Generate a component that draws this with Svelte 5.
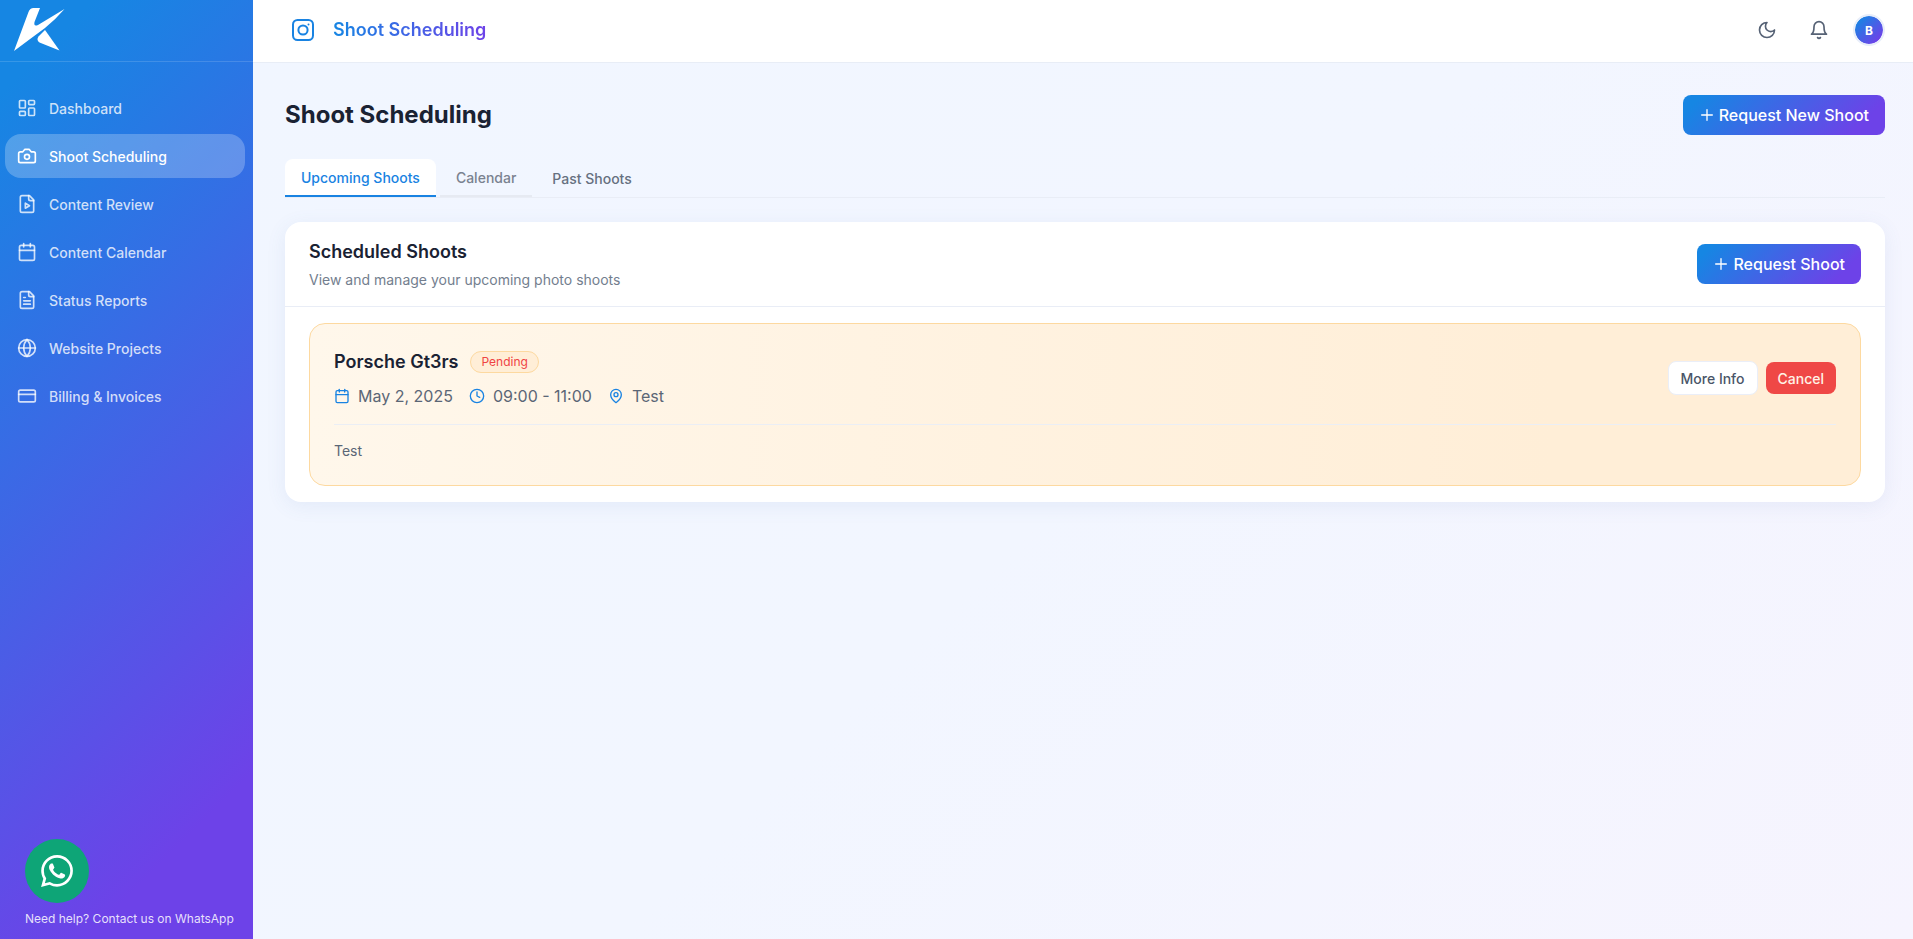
<script>
  const nav = [
    { label: 'Dashboard', icon: 'dashboard' },
    { label: 'Shoot Scheduling', icon: 'camera', active: true },
    { label: 'Content Review', icon: 'fileplay' },
    { label: 'Content Calendar', icon: 'calendar' },
    { label: 'Status Reports', icon: 'filetext' },
    { label: 'Website Projects', icon: 'globe' },
    { label: 'Billing & Invoices', icon: 'card' }
  ];

  const tabs = ['Upcoming Shoots', 'Calendar', 'Past Shoots'];
  let current = $state('Upcoming Shoots');

  const icons = {
    dashboard:
      '<rect width="7" height="9" x="3" y="3" rx="1"/><rect width="7" height="5" x="14" y="3" rx="1"/><rect width="7" height="9" x="14" y="12" rx="1"/><rect width="7" height="5" x="3" y="16" rx="1"/>',
    camera:
      '<path d="M14.5 4h-5L7 7H4a2 2 0 0 0-2 2v9a2 2 0 0 0 2 2h16a2 2 0 0 0 2-2V9a2 2 0 0 0-2-2h-3l-2.5-3z"/><circle cx="12" cy="13" r="3"/>',
    fileplay:
      '<path d="M15 2H6a2 2 0 0 0-2 2v16a2 2 0 0 0 2 2h12a2 2 0 0 0 2-2V7Z"/><path d="M14 2v4a2 2 0 0 0 2 2h4"/><path d="m10 11 5 3-5 3v-6Z"/>',
    calendar:
      '<path d="M8 2v4"/><path d="M16 2v4"/><rect width="18" height="18" x="3" y="4" rx="2"/><path d="M3 10h18"/>',
    filetext:
      '<path d="M15 2H6a2 2 0 0 0-2 2v16a2 2 0 0 0 2 2h12a2 2 0 0 0 2-2V7Z"/><path d="M14 2v4a2 2 0 0 0 2 2h4"/><path d="M10 9H8"/><path d="M16 13H8"/><path d="M16 17H8"/>',
    globe:
      '<circle cx="12" cy="12" r="10"/><path d="M12 2a14.5 14.5 0 0 0 0 20 14.5 14.5 0 0 0 0-20"/><path d="M2 12h20"/>',
    card: '<rect width="20" height="14" x="2" y="5" rx="2"/><path d="M2 10h20"/>',
    insta:
      '<rect width="20" height="20" x="2" y="2" rx="4.5"/><circle cx="12" cy="12" r="4.6"/><path d="M17.5 6.5h.01"/>',
    moon: '<path d="M12 3a6 6 0 0 0 9 9 9 9 0 1 1-9-9Z"/>',
    bell:
      '<path d="M6 8a6 6 0 0 1 12 0c0 7 3 9 3 9H3s3-2 3-9"/><path d="M10.3 21a1.94 1.94 0 0 0 3.4 0"/>',
    plus: '<path d="M4 12h16"/><path d="M12 4v16"/>',
    clock: '<circle cx="12" cy="12" r="10"/><path d="M12 6v6l4 2"/>',
    pin: '<path d="M20 10c0 6-8 12-8 12s-8-6-8-12a8 8 0 0 1 16 0Z"/><circle cx="12" cy="10" r="3"/>'
  };
</script>

{#snippet icon(name, size, stroke = 2)}
  <svg
    width={size}
    height={size}
    viewBox="0 0 24 24"
    fill="none"
    stroke="currentColor"
    stroke-width={stroke}
    stroke-linecap="round"
    stroke-linejoin="round"
    aria-hidden="true">{@html icons[name]}</svg
  >
{/snippet}

<div class="app">
  <aside class="sidebar">
    <div class="brand">
      <svg class="logo" width="52" height="44" viewBox="0 0 52 44" fill="#fff" aria-hidden="true">
        <path d="M0 43 14.500 4Q16 0 19.500 0H26L20.500 14Q19.500 19 24 17L50.500 1Q42 11 31 20Q16 31 0 43Z" />
        <path d="M31 22 45.500 42.500 25.500 34.500Q22 32 24.500 28.500Z" />
      </svg>
    </div>
    <nav>
      {#each nav as item}
        <a href="#top" class:active={item.active}>
          {@render icon(item.icon, 20)}
          <span>{item.label}</span>
        </a>
      {/each}
    </nav>
    <div class="help">
      <a class="whatsapp" href="#whatsapp" aria-labelledby="help-text">
        <svg width="32" height="32" viewBox="0 0 24 24" fill="#fff" aria-hidden="true">
          <path
            d="M17.472 14.382c-.297-.149-1.758-.867-2.030-.967-.273-.099-.471-.148-.670.150-.197.297-.767.966-.940 1.164-.173.199-.347.223-.644.075-.297-.150-1.255-.463-2.390-1.475-.883-.788-1.480-1.761-1.653-2.059-.173-.297-.018-.458.130-.606.134-.133.298-.347.446-.520.149-.174.198-.298.298-.497.099-.198.050-.371-.025-.520-.075-.149-.669-1.612-.916-2.207-.242-.579-.487-.500-.669-.510-.173-.008-.371-.010-.570-.010-.198 0-.520.074-.792.372-.272.297-1.040 1.016-1.040 2.479 0 1.462 1.065 2.875 1.213 3.074.149.198 2.096 3.200 5.077 4.487.709.306 1.262.489 1.694.625.712.227 1.360.195 1.871.118.571-.085 1.758-.719 2.006-1.413.248-.694.248-1.289.173-1.413-.074-.124-.272-.198-.570-.347m-5.421 7.403h-.004a9.870 9.870 0 01-5.031-1.378l-.361-.214-3.741.982.998-3.648-.235-.374a9.860 9.860 0 01-1.510-5.260c.001-5.450 4.436-9.884 9.888-9.884 2.640 0 5.122 1.030 6.988 2.898a9.825 9.825 0 012.893 6.994c-.003 5.450-4.437 9.884-9.885 9.884m8.413-18.297A11.815 11.815 0 0012.050 0C5.495 0 .160 5.335.157 11.892c0 2.096.547 4.142 1.588 5.945L.057 24l6.305-1.654a11.882 11.882 0 005.683 1.448h.005c6.554 0 11.890-5.335 11.893-11.893a11.821 11.821 0 00-3.480-8.413Z"
          />
        </svg>
      </a>
      <span id="help-text">Need help? Contact us on WhatsApp</span>
    </div>
  </aside>

  <div class="page">
    <header class="topbar">
      <div class="crumb">
        <span class="mark">{@render icon('insta', 24)}</span>
        <span class="crumb-title">Shoot Scheduling</span>
      </div>
      <div class="tools">
        <div class="quick">
          <button class="round" aria-label="Toggle theme">{@render icon('moon', 20)}</button>
          <button class="round" aria-label="Notifications">{@render icon('bell', 20)}</button>
        </div>
        <button class="avatar">B</button>
      </div>
    </header>

    <main>
      <div class="heading">
        <h1>Shoot Scheduling</h1>
        <button class="primary">{@render icon('plus', 16)}Request New Shoot</button>
      </div>

      <div class="tabs" role="tablist">
        {#each tabs as tab, i}
          <button
            role="tab"
            aria-selected={current === tab}
            class:selected={current === tab}
            class:soft={i === 1}
            onclick={() => (current = tab)}>{tab}</button
          >
        {/each}
      </div>

      <section class="card">
        <div class="card-head">
          <div>
            <h2>Scheduled Shoots</h2>
            <p>View and manage your upcoming photo shoots</p>
          </div>
          <button class="primary">{@render icon('plus', 16)}Request Shoot</button>
        </div>
        <div class="card-body">
          <article class="shoot">
            <div class="shoot-top">
              <div class="info">
                <div class="name">
                  <h3>Porsche Gt3rs</h3>
                  <span class="badge">Pending</span>
                </div>
                <div class="meta">
                  <span>{@render icon('calendar', 16)}May 2, 2025</span>
                  <span>{@render icon('clock', 16)}09:00 - 11:00</span>
                  <span>{@render icon('pin', 16)}Test</span>
                </div>
              </div>
              <div class="actions">
                <button class="small">More Info</button>
                <button class="small danger">Cancel</button>
              </div>
            </div>
            <p class="notes">Test</p>
          </article>
        </div>
      </section>
    </main>
  </div>
</div>

<style>
  :global(*) {
    box-sizing: border-box;
  }
  :global(body) {
    font-family: Inter, 'Liberation Sans', sans-serif;
    color: #1a2233;
  }
  h1,
  h2,
  h3,
  p {
    margin: 0;
  }
  a {
    text-decoration: none;
  }
  button {
    font-family: inherit;
    cursor: pointer;
  }
  svg {
    display: block;
    flex: none;
  }
  .app {
    display: flex;
    min-height: 100vh;
  }
  .sidebar {
    flex: none;
    width: 253px;
    display: flex;
    flex-direction: column;
    background: linear-gradient(135deg, #1686e3 8%, #6d42e8 86%);
  }
  .brand {
    height: 62px;
    padding: 8px 14px;
    border-bottom: 1px solid rgba(255, 255, 255, 0.14);
  }
  nav {
    display: flex;
    flex-direction: column;
    gap: 4px;
    padding: 24px 8px 24px 5px;
  }
  nav a {
    display: flex;
    align-items: center;
    gap: 12px;
    height: 44px;
    padding: 0 12px;
    border-radius: 16px;
    font-size: 14px;
    font-weight: 500;
    color: rgba(255, 255, 255, 0.78);
  }
  nav a.active {
    color: #fff;
    background: rgba(255, 255, 255, 0.24);
  }
  .help {
    margin-top: auto;
    padding: 0 16px 12px 25px;
    display: flex;
    flex-direction: column;
    gap: 8px;
    font-size: 12px;
    line-height: 16px;
    color: rgba(255, 255, 255, 0.85);
    white-space: nowrap;
  }
  .whatsapp {
    display: grid;
    place-items: center;
    width: 64px;
    height: 64px;
    border-radius: 50%;
    background: #0ea577;
  }
  .page {
    flex: 1;
    min-width: 0;
    display: flex;
    flex-direction: column;
    background: linear-gradient(135deg, #f1f6ff, #f2f6ff 50%, #f6f4fe);
  }
  .topbar {
    display: flex;
    align-items: center;
    justify-content: space-between;
    height: 63px;
    padding: 0 28px 2px 30px;
    background: #fff;
    border-bottom: 1px solid #e8edf6;
  }
  .crumb,
  .tools,
  .quick {
    display: flex;
    align-items: center;
  }
  .crumb {
    gap: 10px;
  }
  .mark {
    padding: 8px;
    color: #1983e2;
  }
  .crumb-title {
    font-size: 18px;
    line-height: 28px;
    font-weight: 600;
    color: transparent;
    background: linear-gradient(90deg, #1686e3, #6d42e8);
    background-clip: text;
  }
  .tools {
    gap: 14px;
  }
  .quick {
    gap: 12px;
  }
  .round {
    display: grid;
    place-items: center;
    width: 40px;
    height: 40px;
    padding: 0;
    border: 0;
    border-radius: 50%;
    background: none;
    color: #566275;
  }
  .avatar {
    width: 32px;
    height: 32px;
    padding: 0;
    border: 2px solid #e8eefa;
    border-radius: 50%;
    background: linear-gradient(135deg, #1686e3 10%, #6d42e8 85%);
    background-clip: padding-box;
    color: #fff;
    font-size: 12px;
    font-weight: 700;
  }
  main {
    padding: 32px 28px 32px 32px;
  }
  .heading {
    display: flex;
    align-items: center;
    justify-content: space-between;
    margin-bottom: 24px;
  }
  h1 {
    font-size: 24px;
    line-height: 32px;
    font-weight: 700;
  }
  .primary {
    display: flex;
    align-items: center;
    gap: 4px;
    height: 40px;
    padding: 0 16px;
    border: 0;
    border-radius: 8px;
    background: linear-gradient(135deg, #1686e3 8%, #6d42e8 86%);
    color: #fff;
    font-size: 16px;
    font-weight: 500;
  }
  .tabs {
    display: flex;
    gap: 4px;
    height: 39px;
    margin-bottom: 24px;
    border-bottom: 1px solid #e9edf6;
  }
  .tabs button {
    padding: 0 16px;
    border: 0;
    border-radius: 8px 8px 0 0;
    background: none;
    font-size: 14px;
    font-weight: 500;
    color: #667080;
  }
  .tabs .selected {
    border-bottom: 2px solid #1983e2;
    background: #fff;
    color: #1983e2;
  }
  .tabs .soft:not(.selected) {
    border-bottom: 2px solid #e6eaf2;
    border-radius: 0;
    color: #7a8290;
  }
  .card {
    border-radius: 16px;
    background: #fff;
    box-shadow: 0 4px 20px rgba(80, 110, 180, 0.09);
  }
  .card-head {
    display: flex;
    align-items: center;
    justify-content: space-between;
    padding: 16px 24px;
    border-bottom: 1px solid #e9edf6;
  }
  h2,
  h3 {
    font-size: 18px;
    line-height: 28px;
    font-weight: 600;
  }
  .card-head p {
    margin-top: 4px;
    font-size: 14px;
    line-height: 20px;
    color: #737e8e;
  }
  .card-body {
    padding: 16px 24px;
  }
  .shoot {
    padding: 24px;
    border: 1px solid #fdd9a0;
    border-radius: 16px;
    background: linear-gradient(90deg, #fff7eb, #ffeed7 80%);
  }
  .shoot-top {
    display: flex;
    align-items: center;
    justify-content: space-between;
    padding-bottom: 16px;
    border-bottom: 1px solid #ebeef5;
  }
  .name {
    display: flex;
    align-items: center;
    gap: 12px;
    margin-bottom: 8px;
  }
  .badge {
    padding: 2px 10px;
    border: 1px solid #fdd9a0;
    border-radius: 11px;
    background: #ffeed7;
    color: #ef4343;
    font-size: 12px;
    line-height: 16px;
  }
  .meta {
    display: flex;
    gap: 16px;
    font-size: 16px;
    line-height: 24px;
    color: #5b6676;
  }
  .meta span {
    display: flex;
    align-items: center;
    gap: 8px;
  }
  .meta svg {
    color: #1983e2;
  }
  .actions {
    display: flex;
    align-items: center;
    gap: 8px;
  }
  .small {
    height: 34px;
    padding: 0 12px;
    border: 1px solid #eaeef8;
    border-radius: 8px;
    background: #fff;
    color: #4a5568;
    font-size: 14px;
    font-weight: 500;
  }
  .danger {
    height: 32px;
    border: 0;
    background: #ef4846;
    color: #fff3e6;
  }
  .notes {
    margin-top: 16px;
    font-size: 14px;
    line-height: 20px;
    color: #5b6676;
  }
</style>
